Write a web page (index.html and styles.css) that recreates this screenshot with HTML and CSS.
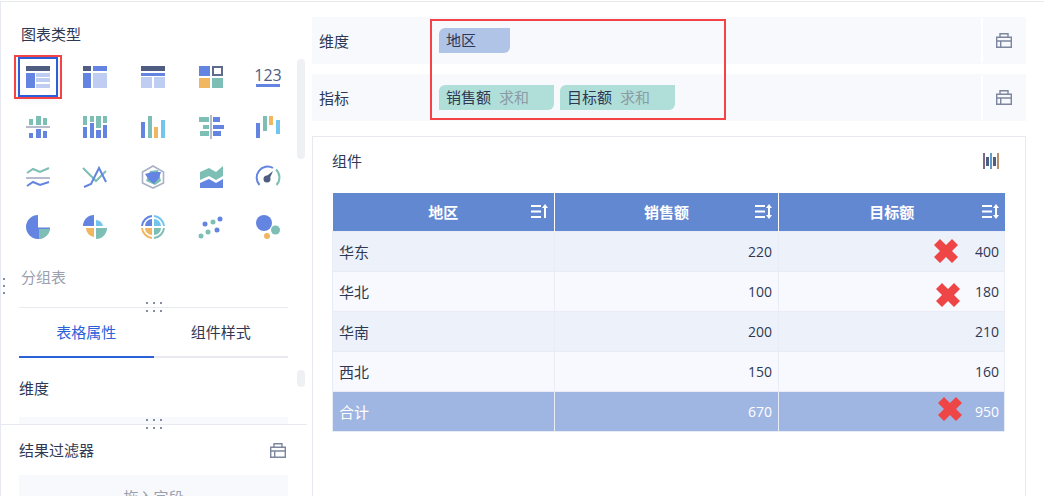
FILE: index.html
```html
<!DOCTYPE html>
<html lang="zh">
<head>
<meta charset="utf-8">
<title>组件</title>
<link rel="stylesheet" href="styles.css">
</head>
<body>
<svg class="defs" width="0" height="0">
  <symbol id="box" viewBox="0 0 16 15">
    <path d="M.7 4.200h14.600v10.100H.7zM4 4.200V.7h8v3.500M.7 8h14.600M4.700 8v6.300" fill="none" stroke="#7c869e" stroke-width="1.400"/>
  </symbol>
  <symbol id="sort-up" viewBox="0 0 17 15">
    <path d="M0 2h10M0 7.500h10M0 13h10" stroke="#fff" stroke-width="2" fill="none"/>
    <path d="M14 14V3" stroke="#fff" stroke-width="2"/><path d="M14 0l3 4h-6z" fill="#fff"/>
  </symbol>
  <symbol id="sort-both" viewBox="0 0 17 15">
    <path d="M0 2h10M0 7.500h10M0 13h10" stroke="#fff" stroke-width="2" fill="none"/>
    <path d="M14 3v9" stroke="#fff" stroke-width="2"/><path d="M14 0l3 4h-6zM14 15l3-4h-6z" fill="#fff"/>
  </symbol>
  <symbol id="cross" viewBox="0 0 24 24">
    <path d="M6 0l6 6 6-6 6 6-6 6 6 6-6 6-6-6-6 6-6-6 6-6-6-6z" fill="#ee4646"/>
  </symbol>
  <symbol id="dots" viewBox="0 0 16 2">
    <circle cx="1" cy="1" r="1" fill="#5b6680"/><circle cx="8" cy="1" r="1" fill="#5b6680"/><circle cx="15" cy="1" r="1" fill="#5b6680"/>
  </symbol>
</svg>
<div class="app">
  <aside class="side">
    <div class="side-top">
      <div class="side-title">图表类型</div>
      <div class="chart-grid">
        <div class="cell"><div class="selected">
          <svg class="ic" viewBox="0 0 24 24"><rect y="1" width="24" height="5" fill="#4f5d82"/><rect y="8" width="9" height="15" fill="#6384e0"/><path d="M10 8h14v4H10zM10 13h14v4H10zM10 19h14v4H10z" fill="#c0cdf2"/></svg>
        </div></div>
        <div class="cell"><svg class="ic" viewBox="0 0 24 24"><rect y="1" width="8" height="5" fill="#4f5d82"/><rect x="10" y="1" width="14" height="5" fill="#6384e0"/><rect y="8" width="8" height="15" fill="#6384e0"/><rect x="10" y="8" width="14" height="15" fill="#c0cdf2"/></svg></div>
        <div class="cell"><svg class="ic" viewBox="0 0 24 24"><rect y="1" width="24" height="5" fill="#4f5d82"/><rect y="8" width="24" height="3" fill="#6384e0"/><path d="M0 12h11v11H0zM13 12h11v11H13z" fill="#c0cdf2"/></svg></div>
        <div class="cell"><svg class="ic" viewBox="0 0 24 24"><rect y="1" width="11" height="10" fill="#6384e0"/><rect x="14" y="2" width="9" height="8" fill="#fff" stroke="#5f6b8a" stroke-width="2"/><rect y="13" width="11" height="10" fill="#f0b660"/><rect x="13" y="13" width="11" height="10" fill="#7dbfb4"/></svg></div>
        <div class="cell"><svg class="ic" viewBox="0 0 24 24"><text class="num-glyph" x="12" y="15.500" text-anchor="middle">123</text><rect y="19" width="24" height="3" fill="#6384e0"/></svg></div>

        <div class="cell"><svg class="ic" viewBox="0 0 24 24"><path d="M0 11h24v2H0z" fill="#b6bccb"/><path d="M3 4h4v6H3zM10 1h5v9h-5zM17 3h4v7h-4z" fill="#7dbfb4"/><path d="M3 18h4v5H3zM10 14h5v9h-5zM17 16h4v7h-4z" fill="#6384e0"/></svg></div>
        <div class="cell"><svg class="ic" viewBox="0 0 24 24"><path d="M0 1h4v9H0zM7 1h4v6H7zM13 1h5v12h-5zM20 1h4v7h-4z" fill="#7dbfb4"/><path d="M0 12h4v11H0zM7 8h4v15H7zM13 15h5v8h-5zM20 10h4v13h-4z" fill="#6384e0"/></svg></div>
        <div class="cell"><svg class="ic" viewBox="0 0 24 24"><rect y="7" width="4" height="16" fill="#6384e0"/><rect x="7" y="1" width="4" height="22" fill="#7dbfb4"/><rect x="13" y="12" width="4" height="11" fill="#f0b660"/><rect x="20" y="5" width="4" height="18" fill="#74c5ee"/></svg></div>
        <div class="cell"><svg class="ic" viewBox="0 0 24 24"><rect x="11" width="2" height="24" fill="#b6bccb"/><path d="M0 2h10v5H0zM4 10h6v4H4zM1 16h9v5H1z" fill="#7dbfb4"/><path d="M14 2h7v5h-7zM14 10h11v4H14zM14 16h8v5h-8z" fill="#6384e0"/></svg></div>
        <div class="cell"><svg class="ic" viewBox="0 0 24 24"><rect y="8" width="4" height="15" fill="#6384e0"/><rect x="7" y="1" width="4" height="15" fill="#7dbfb4"/><rect x="13" y="1" width="4" height="9" fill="#f0b660"/><rect x="20" y="5" width="4" height="14" fill="#74c5ee"/></svg></div>

        <div class="cell"><svg class="ic" viewBox="0 0 24 24"><path d="M1 8l6-4 7 3 9-4" fill="none" stroke="#7dbfb4" stroke-width="2"/><path d="M0 12h24v2H0z" fill="#b6bccb"/><path d="M1 21l6-4 7 3 9-3" fill="none" stroke="#6384e0" stroke-width="2"/></svg></div>
        <div class="cell"><svg class="ic" viewBox="0 0 24 24"><path d="M0 3l13 13 10-10" fill="none" stroke="#7dbfb4" stroke-width="2"/><path d="M1 22l7-3 8-16 7 14" fill="none" stroke="#6384e0" stroke-width="2"/></svg></div>
        <div class="cell"><svg class="ic" viewBox="0 0 24 24"><path d="M12 1l10.500 6v11L12 23 1.500 18V7z" fill="none" stroke="#aab1c2" stroke-width="1.600"/><path d="M9 6l8-1 3 11-6 4-9-4z" fill="#7dbfb4"/><path d="M4 9l7-2 9 0-2 6-5 6-5-4z" fill="#6384e0"/></svg></div>
        <div class="cell"><svg class="ic" viewBox="0 0 24 24"><path d="M1 7l9-4 7 4 7-6v10l-7 4-7-4-9 4z" fill="#7dbfb4"/><path d="M1 18l9-4 7 4 7-4v9H1z" fill="#6384e0"/></svg></div>
        <div class="cell"><svg class="ic" viewBox="0 0 24 24"><path d="M3.500 20A11 11 0 0 1 17 3" fill="none" stroke="#6384e0" stroke-width="2"/><path d="M20 4.500A11 11 0 0 1 20.500 20" fill="none" stroke="#7dbfb4" stroke-width="2"/><circle cx="11" cy="14" r="3.500" fill="#4f5d82"/><path d="M9.500 12l7.500-6-4 9z" fill="#4f5d82"/></svg></div>

        <div class="cell"><svg class="ic" viewBox="0 0 24 24"><path d="M12 0A12 12 0 1 0 24 12.500H12z" fill="#6384e0"/><path d="M13 14h11A11.500 11.500 0 0 1 13 24z" fill="#7dbfb4"/></svg></div>
        <div class="cell"><svg class="ic" viewBox="0 0 24 24"><path d="M11 0v11H0A11 11 0 0 1 11 0z" fill="#6384e0"/><path d="M13 5v6h7A7 7 0 0 0 13 5z" fill="#74c5ee"/><path d="M11 13v9A9 9 0 0 1 3 13z" fill="#f0b660"/><path d="M13 13h11A11 11 0 0 1 13 24z" fill="#7dbfb4"/></svg></div>
        <div class="cell"><svg class="ic" viewBox="0 0 24 24"><path d="M1 11A11 11 0 0 1 11 1" fill="none" stroke="#6384e0" stroke-width="2"/><path d="M13 1A11 11 0 0 1 23 11" fill="none" stroke="#74c5ee" stroke-width="2"/><path d="M11 23A11 11 0 0 1 1 13" fill="none" stroke="#f0b660" stroke-width="2"/><path d="M23 13A11 11 0 0 1 13 23" fill="none" stroke="#7dbfb4" stroke-width="2"/><path d="M11 4v7H4a7 7 0 0 1 7-7z" fill="#6384e0"/><path d="M13 4a7 7 0 0 1 7 7h-7z" fill="#74c5ee"/><path d="M4 13h7v7a7 7 0 0 1-7-7z" fill="#f0b660"/><path d="M13 13h7a7 7 0 0 1-7 7z" fill="#7dbfb4"/></svg></div>
        <div class="cell"><svg class="ic" viewBox="0 0 24 24"><circle cx="6" cy="9" r="2.500" fill="#6384e0"/><circle cx="21" cy="4" r="2.500" fill="#6384e0"/><circle cx="18" cy="15" r="2.500" fill="#6384e0"/><circle cx="14" cy="7" r="2.500" fill="#7dbfb4"/><circle cx="9" cy="17" r="2.500" fill="#7dbfb4"/><circle cx="2" cy="21" r="2.500" fill="#7dbfb4"/></svg></div>
        <div class="cell"><svg class="ic" viewBox="0 0 24 24"><circle cx="8" cy="8" r="8" fill="#6384e0"/><circle cx="19.500" cy="15" r="4.500" fill="#7dbfb4"/><circle cx="11" cy="21" r="3" fill="#f0b660"/></svg></div>
      </div>
      <div class="side-caption">分组表</div>
      <div class="tabs">
        <div class="tab active">表格属性</div>
        <div class="tab">组件样式</div>
      </div>
      <div class="side-label">维度</div>
      <div class="side-well"></div>
      <svg class="dots dots-a"><use href="#dots"/></svg>
      <svg class="dots dots-b"><use href="#dots"/></svg>
      <svg class="dots dots-c"><use href="#dots"/></svg>
      <div class="thumb thumb-a"></div>
      <div class="thumb thumb-b"></div>
      <div class="grip"><i></i><i></i><i></i></div>
    </div>
    <div class="side-bottom">
      <svg class="dots dots-d"><use href="#dots"/></svg>
      <div class="filter-head">
        <span>结果过滤器</span>
        <svg class="box"><use href="#box"/></svg>
      </div>
      <div class="drop">拖入字段</div>
    </div>
  </aside>
  <main class="main">
    <div class="field">
      <div class="field-name">维度</div>
      <div class="field-body"><span class="chip dim">地区</span></div>
      <div class="field-tool"><svg class="box"><use href="#box"/></svg></div>
    </div>
    <div class="field">
      <div class="field-name">指标</div>
      <div class="field-body">
        <span class="chip mea">销售额<em>求和</em></span>
        <span class="chip mea">目标额<em>求和</em></span>
      </div>
      <div class="field-tool"><svg class="box"><use href="#box"/></svg></div>
    </div>
    <div class="highlight"></div>
    <section class="card">
      <div class="card-head">
        <span>组件</span>
        <svg class="bars" viewBox="0 0 16 16"><path d="M3 4h3v9H3zM10 4h3v9h-3z" fill="#4f5d82"/><path d="M1 0v16" stroke="#7a6a86" stroke-width="2"/><path d="M8 0v16" stroke="#5f9ccc" stroke-width="2"/><path d="M15 0v16" stroke="#b98f6e" stroke-width="2"/></svg>
      </div>
      <table class="grid">
        <colgroup><col class="c1"><col class="c2"><col class="c3"></colgroup>
        <thead>
          <tr>
            <th>地区<svg class="sort"><use href="#sort-up"/></svg></th>
            <th>销售额<svg class="sort"><use href="#sort-both"/></svg></th>
            <th>目标额<svg class="sort"><use href="#sort-both"/></svg></th>
          </tr>
        </thead>
        <tbody>
          <tr class="odd"><td>华东</td><td class="n">220</td><td class="n mark">400<svg class="cross x1"><use href="#cross"/></svg></td></tr>
          <tr><td>华北</td><td class="n">100</td><td class="n mark">180<svg class="cross x2"><use href="#cross"/></svg></td></tr>
          <tr class="odd"><td>华南</td><td class="n">200</td><td class="n">210</td></tr>
          <tr><td>西北</td><td class="n">150</td><td class="n">160</td></tr>
          <tr class="total"><td>合计</td><td class="n">670</td><td class="n mark">950<svg class="cross x3"><use href="#cross"/></svg></td></tr>
        </tbody>
      </table>
    </section>
  </main>
</div>
</body>
</html>
```
FILE: styles.css
```css
*, *::before, *::after { box-sizing: border-box; }
html, body { margin: 0; padding: 0; height: 496px; overflow: hidden; background: #fff; }
body {
  font-family: "Open Sans", "Noto Sans CJK SC", sans-serif;
  font-size: 15px;
  line-height: 20px;
  color: #2f3853;
}
.defs { position: absolute; }
.app {
  display: flex;
  height: 495px;
  margin-top: 1px;
  border-top: 1px solid #e9eaee;
}
.side {
  width: 312px;
  flex: none;
  display: flex;
  flex-direction: column;
  border-left: 1px solid #e6e9f4;
}
.side-top {
  position: relative;
  height: 422px;
  flex: none;
  overflow: hidden;
  padding-top: 22px;
}
.side-title { padding-left: 20px; }
.chart-grid {
  display: grid;
  grid-template-columns: repeat(5, 57.6px);
  grid-auto-rows: 50px;
  margin: 8px 0 0 8px;
}
.cell { display: flex; align-items: center; justify-content: center; position: relative; }
.ic { width: 24px; height: 24px; display: block; overflow: visible; }
.num-glyph { font-family: "Open Sans", sans-serif; font-size: 16px; fill: #4f5d82; }
.selected {
  position: relative;
  width: 40px;
  height: 40px;
  border: 2px solid #2b5fd9;
  display: flex;
  align-items: center;
  justify-content: center;
  box-shadow: 0 2px 8px rgba(80, 100, 160, .12);
}
.selected::after {
  content: "";
  position: absolute;
  left: -6px;
  top: -4px;
  width: 48px;
  height: 44px;
  border: 2px solid #f44346;
}
.side-caption { margin: 15px 0 0 20px; color: #9aa0ae; }
.tabs {
  display: flex;
  margin: 20px 0 0 18px;
  width: 269px;
  height: 51px;
  border-top: 1px solid #e8eaef;
  border-bottom: 2px solid #e8eaef;
}
.tab { flex: 1; text-align: center; line-height: 49px; height: 50px; }
.tab.active { color: #2b62d9; border-bottom: 2px solid #2b62d9; }
.side-label { margin: 20px 0 0 18px; }
.side-well { margin: 19px 0 0 18px; width: 269px; height: 20px; background: #f8f9fd; }
.dots { position: absolute; width: 16px; height: 2px; left: 145px; }
.dots-a { top: 300px; }
.dots-b { top: 308px; }
.dots-c { top: 417px; }
.thumb { position: absolute; left: 296px; width: 8px; background: #eff0f4; border-radius: 4px; }
.thumb-a { top: 57px; height: 100px; }
.thumb-b { top: 368px; height: 17px; }
.grip { position: absolute; left: 2px; top: 276px; display: flex; flex-direction: column; gap: 5px; }
.grip i { width: 2px; height: 2px; border-radius: 50%; background: #5b6680; display: block; }
.side-bottom {
  position: relative;
  width: 306px;
  border-top: 1px solid #e6e9f1;
  flex: 1;
  overflow: hidden;
}
.dots-d { top: 2px; }
.filter-head {
  display: flex;
  align-items: center;
  justify-content: space-between;
  height: 50px;
  padding: 0 21px 0 18px;
}
.box { width: 16px; height: 15px; display: block; flex: none; }
.drop {
  margin-left: 18px;
  width: 269px;
  height: 44px;
  background: #f8f9fd;
  color: #9aa0ae;
  text-align: center;
  line-height: 44px;
}
.main { position: relative; width: 714px; flex: none; padding-top: 15px; }
.field {
  display: flex;
  align-items: center;
  height: 47px;
  margin-bottom: 10px;
  background: #f8f9fd;
}
.field-name { width: 127px; padding: 1px 0 0 7px; flex: none; }
.field-body { flex: 1; display: flex; gap: 6px; }
.field-tool {
  width: 45px;
  height: 45px;
  flex: none;
  display: flex;
  align-items: center;
  justify-content: center;
  padding-right: 2px;
  border-left: 2px solid #fff;
}
.chip {
  height: 25px;
  line-height: 25px;
  padding-left: 7px;
  border-radius: 6px 0 6px 0;
  display: block;
}
.chip em { font-style: normal; color: #8b9aa6; margin-left: 8px; }
.dim { width: 71px; background: #b0c4e8; }
.mea { width: 115px; background: #b0dfd9; }
.highlight {
  position: absolute;
  left: 118px;
  top: 17px;
  width: 296px;
  height: 101px;
  border: 2px solid #f44346;
}
.card {
  margin-top: 15px;
  height: 400px;
  border: 1px solid #e8e9f0;
  padding: 0 20px 0 19px;
}
.card-head {
  display: flex;
  align-items: center;
  justify-content: space-between;
  height: 56px;
  padding: 0 6px 8px 0;
}
.bars { width: 16px; height: 16px; display: block; }
.grid { width: 672px; border-collapse: collapse; table-layout: fixed; }
.c1 { width: 222px; }
.c2 { width: 224px; }
.c3 { width: 226px; }
.grid th {
  position: relative;
  height: 38px;
  padding: 0;
  background: #6388d2;
  color: #fff;
  font-weight: 700;
  text-align: center;
  border-right: 1px solid #fff;
}
.grid th:last-child { border-right: 0; }
.sort { position: absolute; right: 6px; top: 11px; width: 17px; height: 15px; }
.grid td {
  height: 40px;
  padding: 1px 6px 0;
  border: 1px solid #e8ecf6;
  background: #f8f9fe;
}
.grid .odd td { background: #edf2fa; }
.grid .total td { background: #a0b6e2; color: #fff; border-color: #e8ecf6; }
.total td + td { border-left-color: #fff; }
.grid td.n { text-align: right; font-size: 14px; padding-top: 2px; }
.grid td.mark, .grid tr td.n:last-child { padding-right: 5px; }
.mark { position: relative; }
.cross { position: absolute; width: 24px; height: 24px; }
.x1 { left: 155px; top: 7px; }
.x2 { left: 157px; top: 11px; }
.x3 { left: 159px; top: 5px; }
```
